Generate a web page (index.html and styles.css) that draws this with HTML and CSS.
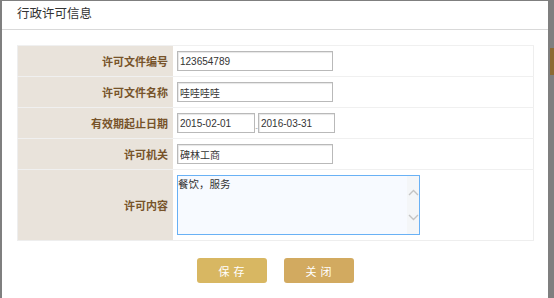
FILE: index.html
```html
<!DOCTYPE html>
<html lang="zh-CN">
<head>
  <meta charset="UTF-8" />
  <title>行政许可信息</title>
  <link rel="stylesheet" href="styles.css">
</head>
<body>
  <div class="dialog">
    <div class="dialog-head">行政许可信息</div>
    <div class="dialog-body">
      <table class="form-table">
        <tr>
          <td class="label">许可文件编号</td>
          <td class="field"><input type="text" class="txt" value="123654789" /></td>
        </tr>
        <tr>
          <td class="label">许可文件名称</td>
          <td class="field"><input type="text" class="txt" value="哇哇哇哇" /></td>
        </tr>
        <tr>
          <td class="label">有效期起止日期</td>
          <td class="field">
            <div class="dates">
              <input type="text" class="txt date" value="2015-02-01" />
              <span class="sep">-</span>
              <input type="text" class="txt date" value="2016-03-31" />
            </div>
          </td>
        </tr>
        <tr>
          <td class="label">许可机关</td>
          <td class="field"><input type="text" class="txt" value="碑林工商" /></td>
        </tr>
        <tr class="tall">
          <td class="label">许可内容</td>
          <td class="field">
            <div class="area-wrap">
              <textarea class="area">餐饮，服务</textarea>
              <div class="fake-scroll">
                <svg width="11" height="7" viewBox="0 0 11 7"><path d="M1 6 L5.5 1.5 L10 6" fill="none" stroke="#c4c4c4" stroke-width="1.4"/></svg>
                <svg width="11" height="7" viewBox="0 0 11 7"><path d="M1 1 L5.5 5.5 L10 1" fill="none" stroke="#c4c4c4" stroke-width="1.4"/></svg>
              </div>
            </div>
          </td>
        </tr>
      </table>
      <div class="btns">
        <button class="btn save">保存</button>
        <button class="btn close">关闭</button>
      </div>
    </div>
  </div>
  <div class="side">
    <div class="side-mark"></div>
  </div>
</body>
</html>
```

FILE: styles.css
```css
body {
  margin: 0;
  padding: 0;
  background-color: #7f7f7f;
  font-family: "Liberation Sans", "Noto Sans CJK SC", sans-serif;
  display: flex;
  height: 298px;
  overflow: hidden;
}

.dialog {
  width: 546px;
  margin: 1px 0 0 2px;
  background-color: #fff;
}

.dialog-head {
  height: 28px;
  line-height: 27px;
  padding-left: 15px;
  border-bottom: 1px solid #d9d9d9;
  font-size: 12.5px;
  color: #333;
}

.dialog-body {
  padding: 15px 14px 0 15px;
}

.form-table {
  width: 517px;
  border-collapse: collapse;
  border: 1px solid #eee;
}

.form-table td {
  border-top: 1px solid #f0f0f0;
  height: 30px;
  padding: 0;
}

.label {
  width: 150px;
  background-color: #e9e3db;
  text-align: right;
  padding-right: 5px !important;
  font-size: 11px;
  font-weight: bold;
  color: #77532a;
}

.field {
  padding-left: 4px !important;
}

.txt {
  display: block;
  box-sizing: border-box;
  width: 156px;
  height: 20px;
  margin: 0;
  padding: 0 2px;
  border: 1px solid #b9b9b9;
  box-shadow: inset 1px 1px 1px #e6e6e6;
  font-family: "Liberation Sans", "Noto Sans CJK SC", sans-serif;
  font-size: 10px;
  color: #333;
  outline: none;
}

.dates {
  display: flex;
  align-items: center;
}

.date {
  width: 78px;
}

.sep {
  width: 3px;
  font-size: 8px;
  color: #999;
  line-height: 8px;
  padding-top: 10px;
  text-align: center;
}

.dates .date + .sep + .date {
  width: 77px;
}

.tall td {
  height: 70px;
}

.area-wrap {
  position: relative;
  width: 243px;
  height: 60px;
}

.area {
  display: block;
  box-sizing: border-box;
  width: 243px;
  height: 60px;
  margin: 0;
  padding: 0 14px 0 0;
  border: 1px solid #69b1f5;
  background-color: #f7faff;
  font-family: "Liberation Sans", "Noto Sans CJK SC", sans-serif;
  font-size: 10.5px;
  color: #333;
  resize: none;
  overflow: hidden;
  outline: none;
}

.fake-scroll {
  position: absolute;
  top: 1px;
  right: 1px;
  bottom: 1px;
  width: 12px;
  background-color: #f4f6f8;
  display: flex;
  flex-direction: column;
  justify-content: space-between;
  align-items: center;
  padding: 13px 0 13px 0;
  box-sizing: border-box;
}

.btns {
  display: flex;
  justify-content: center;
  gap: 17px;
  margin-top: 17px;
  padding-right: 1px;
}

.btn {
  width: 70px;
  height: 25px;
  border: none;
  border-radius: 3px;
  color: #fff;
  font-family: "Liberation Sans", "Noto Sans CJK SC", sans-serif;
  font-size: 11px;
  letter-spacing: 4px;
  text-indent: 4px;
  cursor: pointer;
}

.save {
  background-color: #d8b762;
}

.close {
  background-color: #d2aa60;
}

.side {
  flex: 1;
}

.side-mark {
  margin-top: 48px;
  margin-left: 2px;
  height: 27px;
  background-color: #8b6a33;
}
```
